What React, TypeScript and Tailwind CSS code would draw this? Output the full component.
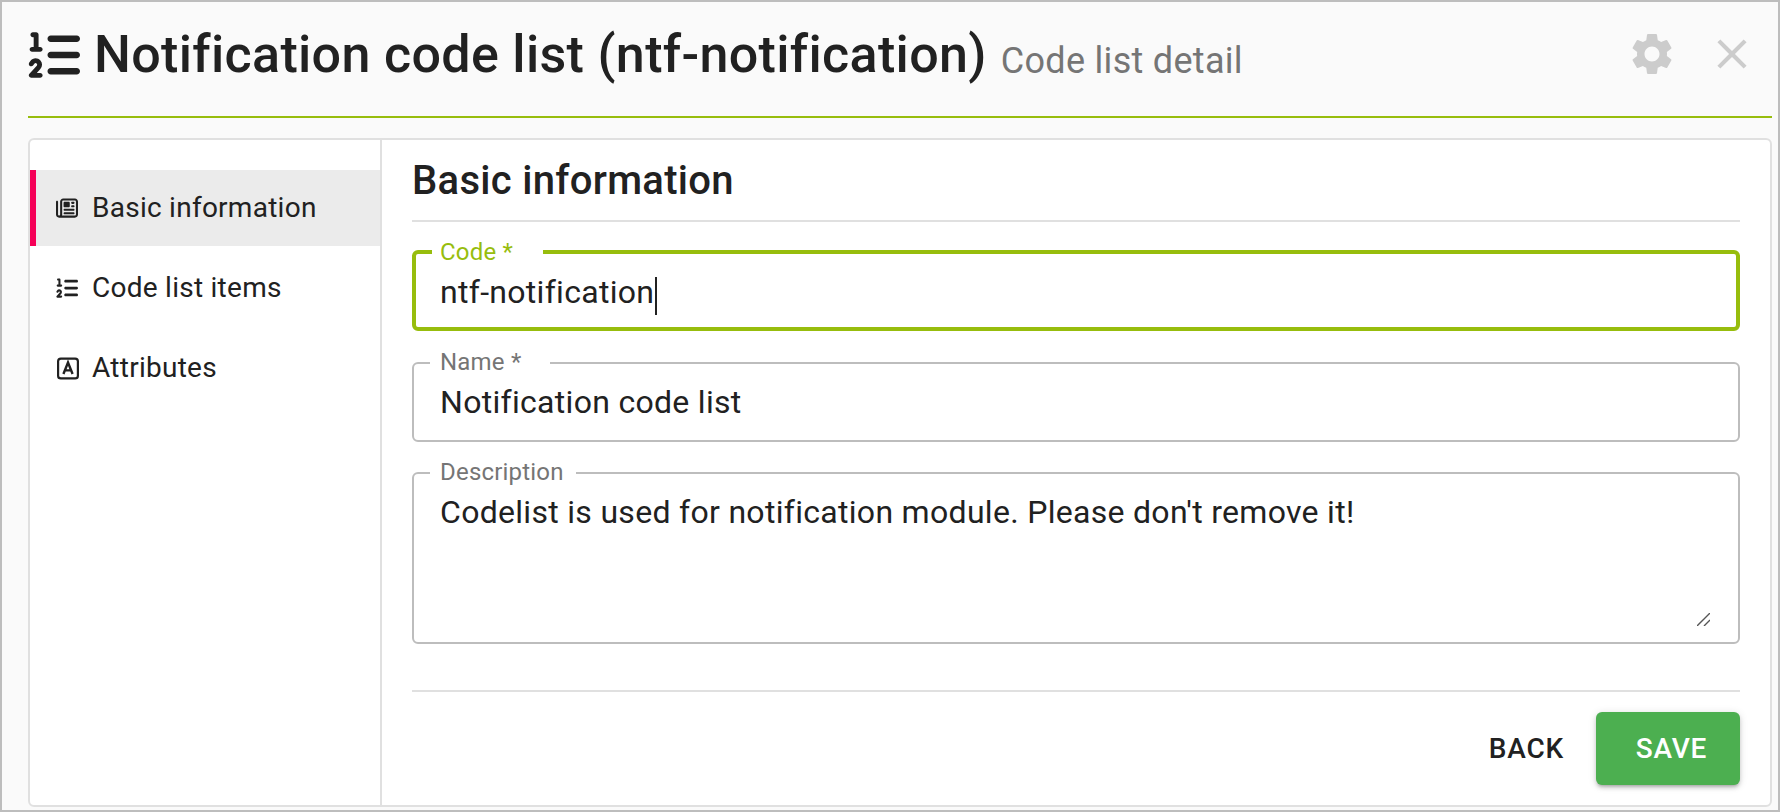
import React from 'react';
import { FaListOl, FaRegNewspaper } from 'react-icons/fa6';
import { MdClose, MdSettings } from 'react-icons/md';

const AttributeIcon = () => (
  <svg viewBox="0 0 24 24" className="w-[25px] h-[25px] ml-[2px]" fill="none" stroke="currentColor" strokeWidth="2.4">
    <rect x="1.2" y="1.2" width="21.6" height="21.6" rx="3" />
    <path d="M7 18 L12 5.5 L17 18 M8.8 14 H15.2" strokeWidth="2.6" />
  </svg>
);

const navItems = [
  { label: 'Basic information', icon: <FaRegNewspaper size={22} />, active: true },
  { label: 'Code list items', icon: <FaListOl size={22} />, active: false },
  { label: 'Attributes', icon: <AttributeIcon />, active: false },
];

type FieldProps = {
  label: string;
  focused?: boolean;
  legendClass: string;
  children: React.ReactNode;
};

const Field = ({ label, focused, legendClass, children }: FieldProps) => (
  <fieldset
    className={
      focused
        ? 'rounded-[6px] border-4 border-[#97bd0d] min-w-0'
        : 'rounded-[6px] border-2 border-[#bdbdbd] min-w-0'
    }
  >
    <legend className={`h-[24px] text-[24px] tracking-[0.2px] whitespace-nowrap ${focused ? 'leading-[24px] text-[#97bd0d]' : 'leading-[22px] text-[#757575]'} ${legendClass}`}>
      {label}
    </legend>
    {children}
  </fieldset>
);

export default function App() {
  return (
    <div
      className="w-screen h-screen bg-[#fafafa] border-2 border-[#bdbdbd] flex flex-col overflow-hidden text-[#212121]"
      style={{ fontFamily: 'Roboto, sans-serif' }}
    >
      <header className="ml-[26px] mr-[6px] h-[116px] shrink-0 border-b-2 border-[#97bd0d] flex items-center">
        <FaListOl size={52} className="shrink-0 -mt-[8px]" />
        <h1 className="ml-[14px] text-[52px] tracking-[0.33px] leading-none font-medium -mt-[8px] whitespace-nowrap">
          Notification code list (ntf-notification)
        </h1>
        <span className="ml-[14px] text-[36px] tracking-[0.3px] leading-none text-[#757575] whitespace-nowrap mt-[3px]">Code list detail</span>
        <div className="ml-auto flex items-center text-[#cccccc] -mt-[10px] mr-[15px]">
          <MdSettings size={50} />
          <MdClose size={50} className="ml-[30px]" />
        </div>
      </header>

      <div className="ml-[26px] mr-[6px] mt-[20px] h-[669px] flex bg-white border-2 border-[#e0e0e0] rounded-[6px]">
        <nav className="w-[352px] shrink-0 border-r-2 border-[#e0e0e0] pt-[30px] flex flex-col gap-[4px]">
          {navItems.map((item) => (
            <div
              key={item.label}
              className={
                item.active
                  ? 'h-[76px] flex items-center bg-[#ebebeb] border-l-[6px] border-[#f50057] pl-[19px]'
                  : 'h-[76px] flex items-center border-l-[6px] border-transparent pl-[19px]'
              }
            >
              <span className="w-[24px] flex justify-center shrink-0">{item.icon}</span>
              <span className="ml-[13px] text-[28px] leading-none tracking-[0.26px]">{item.label}</span>
            </div>
          ))}
        </nav>

        <main className="flex-1 min-w-0 pl-[30px] pr-[30px] flex flex-col">
          <h2 className="h-[82px] shrink-0 pt-[2px] flex items-center text-[40px] tracking-[0.3px] font-medium border-b-2 border-[#e0e0e0]">Basic information</h2>

          <div className="mt-[18px] flex flex-col">
            <Field label="Code *" focused legendClass="ml-[16px] pl-[8px] pr-[30px]">
              <div className="h-[63px] pl-[24px] pb-[8px] flex items-center text-[32px] tracking-[0.3px] leading-none">
                ntf-notification
                <span className="w-[2px] h-[38px] bg-[#212121] ml-[1px] mt-[8px]" />
              </div>
            </Field>
            <div className="mt-[20px]">
              <Field label="Name *" legendClass="ml-[16px] pl-[10px] pr-[29px]">
                <div className="h-[65px] pl-[26px] pb-[12px] flex items-center text-[32px] tracking-[0.3px] leading-none">Notification code list</div>
              </Field>
            </div>
            <div className="mt-[19px]">
              <Field label="Description" legendClass="ml-[16px] pl-[10px] pr-[12px]">
                <div className="relative h-[157px] pl-[26px] pr-[26px] pt-[8px] pb-[16px]">
                  <textarea
                    readOnly
                    className="block w-full h-full text-[32px] tracking-[0.3px] leading-[38px] outline-none bg-transparent resize-none"
                    defaultValue="Codelist is used for notification module. Please don't remove it!"
                  />
                  <svg viewBox="0 0 13 13" className="absolute right-[28px] bottom-[16px] w-[13px] h-[13px]" stroke="#555555" strokeWidth="1.4">
                    <path d="M0 13 L13 0 M7 13 L13 7" />
                  </svg>
                </div>
              </Field>
            </div>
          </div>

          <div className="mt-[46px] border-t-2 border-[#e0e0e0] pt-[20px] flex justify-end items-center">
            <button className="h-[73px] px-[24px] text-[28px] font-medium tracking-[0.8px]">BACK</button>
            <button className="h-[73px] w-[144px] ml-[8px] pl-[7px] rounded-[6px] bg-[#4caf50] text-white text-[28px] font-medium tracking-[0.8px] shadow-[0_3px_3px_-2px_rgba(0,0,0,0.2),0_3px_4px_0_rgba(0,0,0,0.14),0_1px_8px_0_rgba(0,0,0,0.12)]">
              SAVE
            </button>
          </div>
        </main>
      </div>
    </div>
  );
}
